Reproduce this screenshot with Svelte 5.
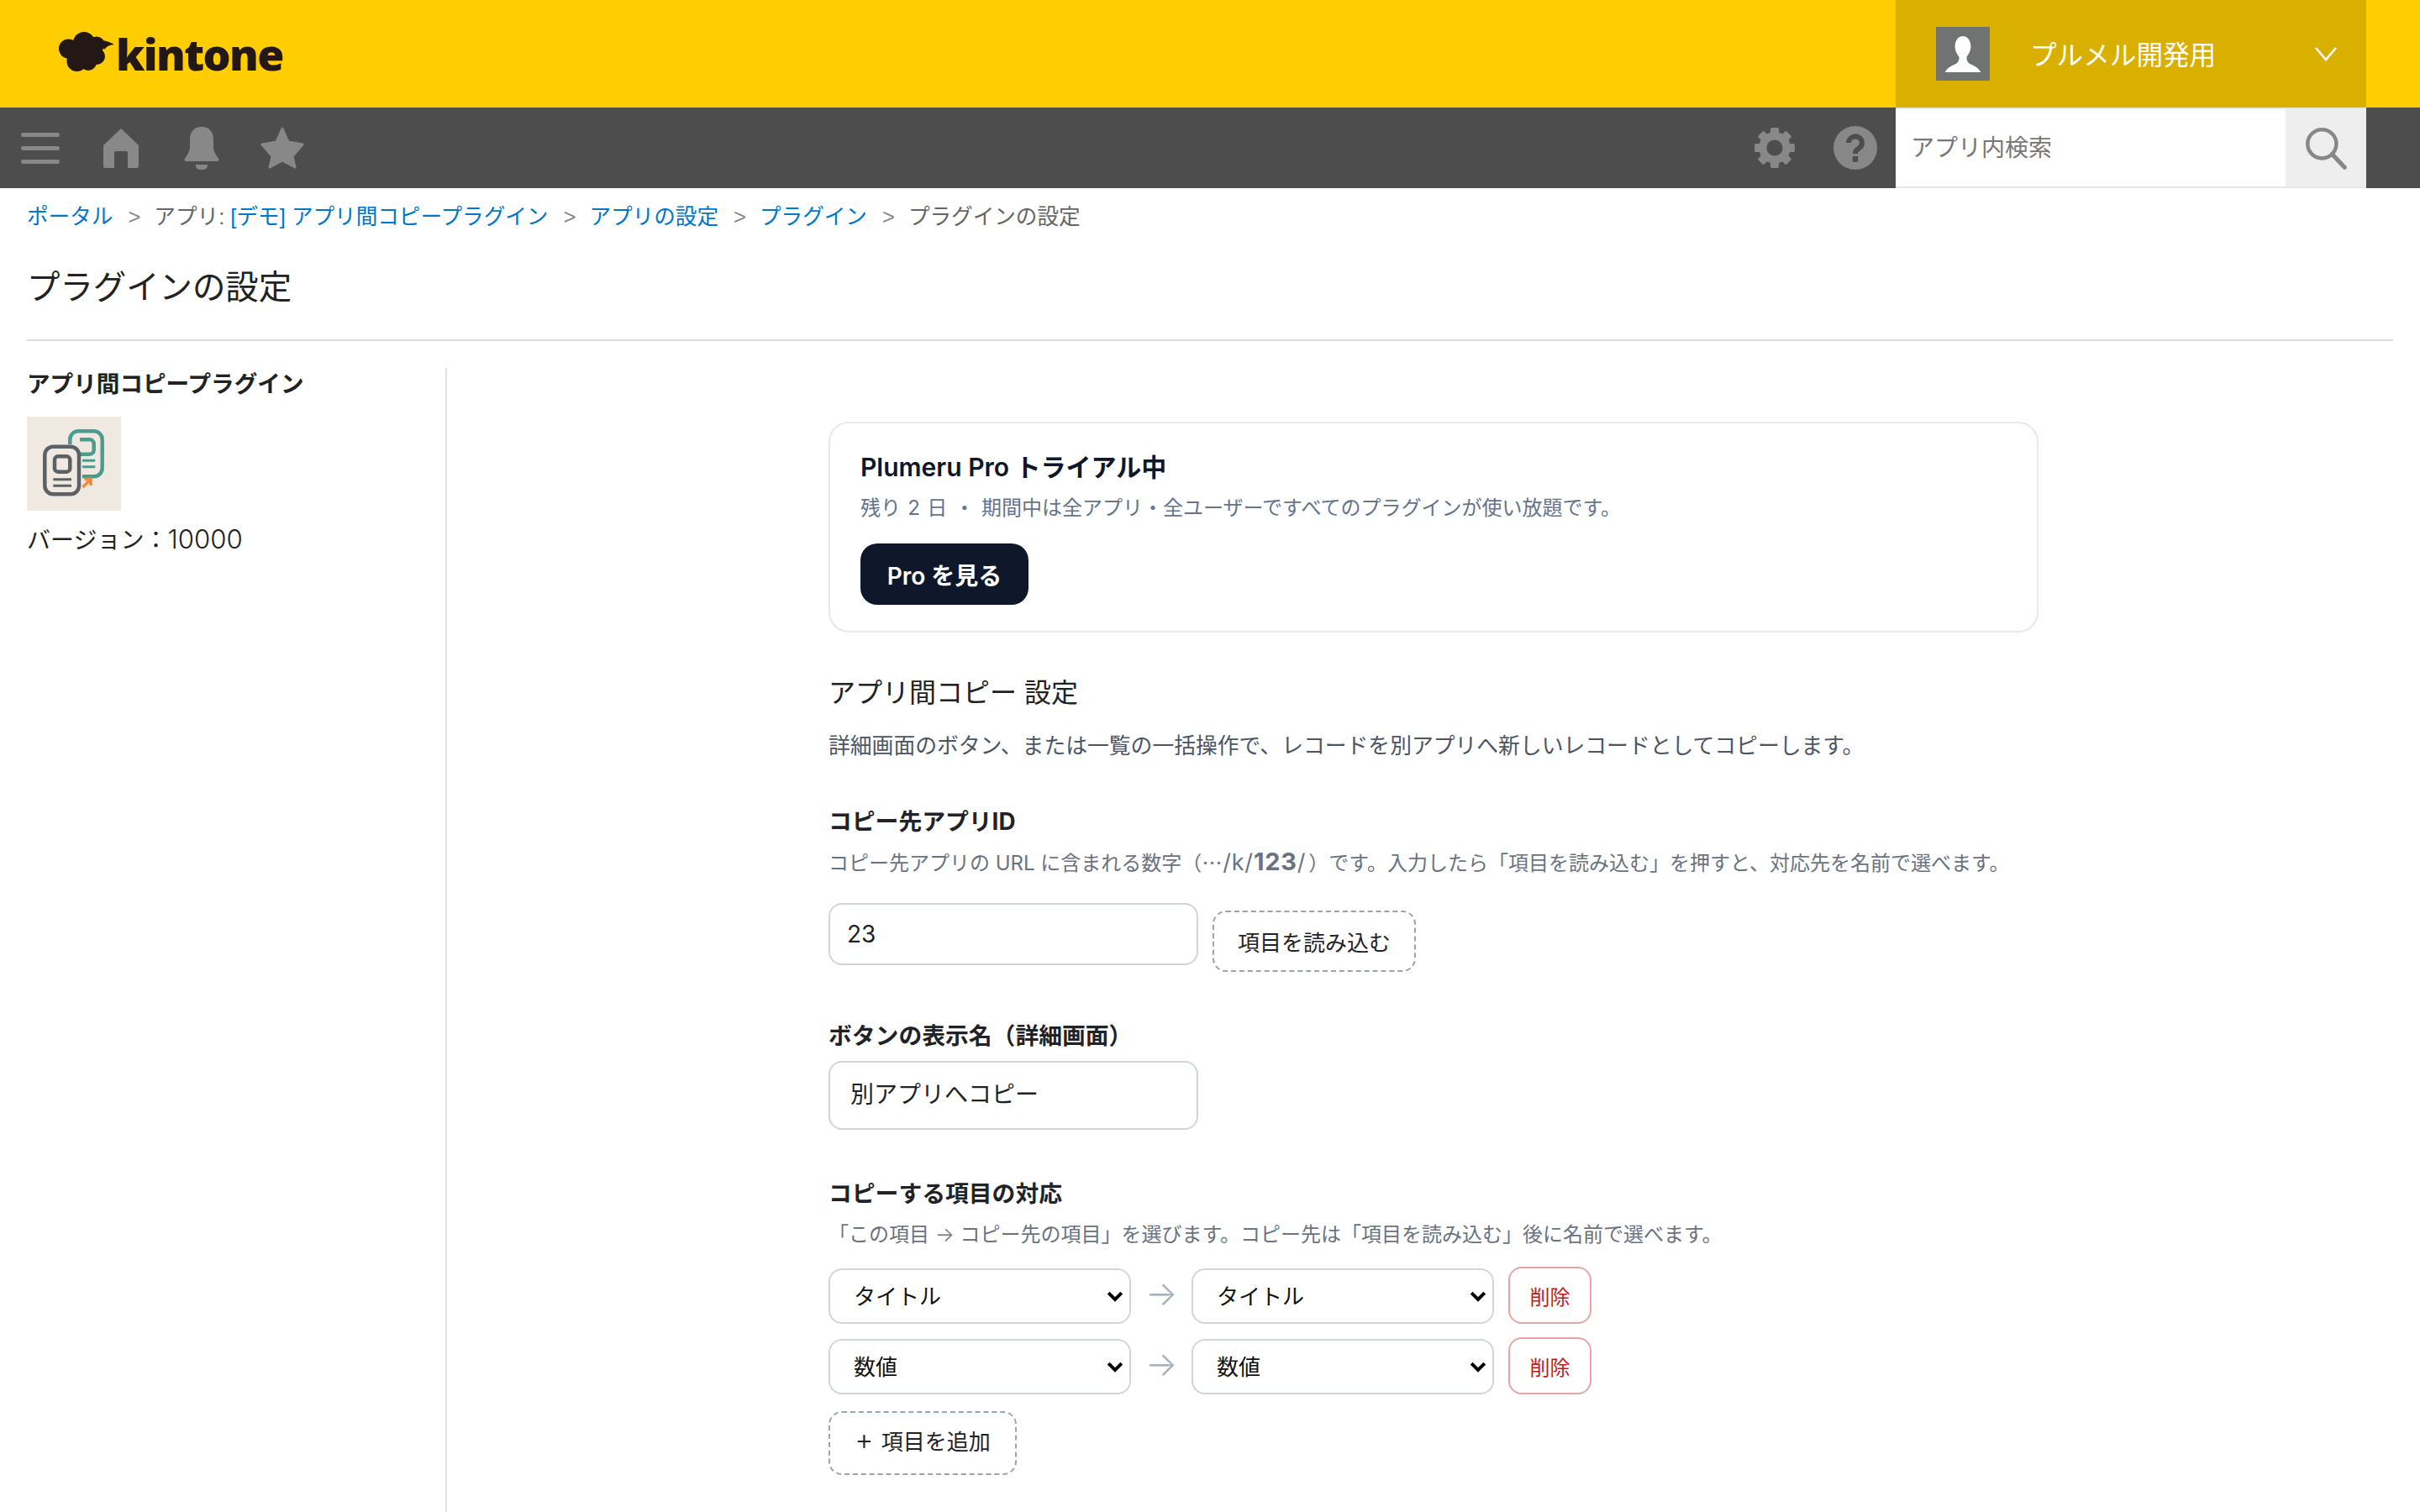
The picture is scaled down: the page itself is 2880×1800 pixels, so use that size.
<script>
  const crumbs = [
    { text: 'ポータル', link: true },
    { prefix: 'アプリ: ', text: '[デモ] アプリ間コピープラグイン', link: true },
    { text: 'アプリの設定', link: true },
    { text: 'プラグイン', link: true },
    { text: 'プラグインの設定', link: false },
  ];

  const fields = ['タイトル', '数値'];
  let rows = $state([
    { from: 'タイトル', to: 'タイトル' },
    { from: '数値', to: '数値' },
  ]);

  let appId = $state('23');
  let buttonName = $state('別アプリへコピー');

  const teeth = [0, 45, 90, 135, 180, 225, 270, 315];
</script>

<div class="page">
  <header class="top">
    <div class="logo">
      <svg class="cloud" viewBox="0 0 66 47" width="33" height="23.5" aria-hidden="true">
        <g fill="#231815">
          <circle cx="11.5" cy="20" r="11.5" />
          <circle cx="30" cy="13" r="13" />
          <circle cx="45" cy="15" r="9.5" />
          <circle cx="45" cy="29" r="10" />
          <circle cx="21.5" cy="35" r="12" />
          <circle cx="35" cy="36" r="10" />
          <circle cx="30" cy="25" r="12" />
          <path d="M50 10 C55 10 61 12 66 15 C61 15 57 17 54 21 Z" />
        </g>
      </svg>
      <span class="wordmark">kintone</span>
    </div>
    <div class="user">
      <div class="avatar">
        <svg viewBox="0 0 32 32" width="32" height="32" aria-hidden="true">
          <path
            fill="#fff"
            d="M16 5.5c-2.8 0-4.7 2.8-4.7 6c0 3 1.5 5 2.5 6.5c0 2-.5 3-2 4c-2 1-5 2-6.5 5h21.4c-1.5-3-4.5-4-6.5-5c-1.5-1-2-2-2-4c1-1.5 2.5-3.5 2.5-6.5c0-3.2-1.9-6-4.7-6z"
          />
        </svg>
      </div>
      <span class="user-name">プルメル開発用</span>
      <svg class="chevron" viewBox="0 0 14 10" width="14" height="10" aria-hidden="true">
        <path d="M1 1.5L7 8.5L13 1.5" fill="none" stroke="#fff" stroke-width="1.3" />
      </svg>
    </div>
  </header>

  <nav class="bar">
    <button class="nav-btn" aria-label="メニュー">
      <svg viewBox="0 0 24 20" width="24" height="20">
        <g fill="#888">
          <rect x="0.5" y="1" width="23" height="2.5" rx="1.2" />
          <rect x="0.5" y="9" width="23" height="2.5" rx="1.2" />
          <rect x="0.5" y="17" width="23" height="2.5" rx="1.2" />
        </g>
      </svg>
    </button>
    <button class="nav-btn" aria-label="ホーム">
      <svg viewBox="0 0 21 24" width="21" height="24">
        <path
          fill="#888"
          d="M10.5 0.5L21 10.5V23a1 1 0 0 1-1 1H14.5V15a1 1 0 0 0-1-1H7.5a1 1 0 0 0-1 1V24H1a1 1 0 0 1-1-1V10.5Z"
        />
      </svg>
    </button>
    <button class="nav-btn" aria-label="通知">
      <svg viewBox="0 0 22 26" width="22" height="26">
        <path
          fill="#888"
          d="M11 0.5C6.5 0.5 4 3.5 4 8V12.5C4 15 2.8 16.8 1 19.2C0.5 20 0.8 21 1.8 21H20.2C21.2 21 21.5 20 21 19.2C19.2 16.8 18 15 18 12.5V8C18 3.5 15.5 0.5 11 0.5Z"
        />
        <path fill="#888" d="M7.5 23H14.5V23.5A2.5 2.5 0 0 1 12 26H10A2.5 2.5 0 0 1 7.5 23.5Z" />
      </svg>
    </button>
    <button class="nav-btn" aria-label="お気に入り">
      <svg viewBox="0 0 26 25" width="26" height="25">
        <path
          fill="#888"
          stroke="#888"
          stroke-width="1.5"
          stroke-linejoin="round"
          d="M13 1L16.5 9L25 10.5L19 17.5L20.5 24L13 20L5.5 24L7 17.5L1 10.5L9.5 9Z"
        />
      </svg>
    </button>

    <div class="bar-right">
      <button class="nav-btn" aria-label="設定">
        <svg viewBox="0 0 24 24" width="25" height="25">
          <g fill="#888">
            {#each teeth as t}
              <rect x="9.6" y="0.5" width="4.8" height="5" rx="0.8" transform="rotate({t} 12 12)" />
            {/each}
          </g>
          <circle cx="12" cy="12" r="6.8" fill="none" stroke="#888" stroke-width="4.4" />
        </svg>
      </button>
      <button class="nav-btn" aria-label="ヘルプ">
        <svg viewBox="0 0 26 26" width="26" height="26">
          <circle cx="13" cy="13" r="13" fill="#888" />
          <path
            d="M9 10a4 3.8 0 1 1 6.2 3.2c-1.5 1-2.2 1.5-2.2 3.3"
            fill="none"
            stroke="#4d4d4d"
            stroke-width="3"
          />
          <rect x="11.4" y="18" width="3.2" height="3.4" fill="#4d4d4d" />
        </svg>
      </button>
      <div class="search">
        <input class="search-input" placeholder="アプリ内検索" />
        <button class="search-btn" aria-label="検索">
          <svg viewBox="0 0 28 28" width="26" height="26">
            <circle cx="11.5" cy="11.5" r="9.2" fill="none" stroke="#888" stroke-width="2.4" />
            <path d="M18 18L26 26.5" stroke="#888" stroke-width="2.8" stroke-linecap="round" />
          </svg>
        </button>
      </div>
    </div>
  </nav>

  <div class="crumbs">
    {#each crumbs as c, i}
      {#if i > 0}<span class="sep">&gt;</span>{/if}
      {#if c.prefix}<span class="crumb-text">{c.prefix}</span>{/if}
      {#if c.link}
        <a href="#top" class="crumb-link">{c.text}</a>
      {:else}
        <span class="crumb-text">{c.text}</span>
      {/if}
    {/each}
  </div>

  <h1 class="page-title">プラグインの設定</h1>
  <hr class="rule" />

  <div class="body">
    <aside class="side">
      <div class="plugin-name">アプリ間コピープラグイン</div>
      <svg class="plugin-icon" viewBox="0 0 112 112" width="56" height="56" aria-hidden="true">
        <rect width="112" height="112" fill="#f0e9e2" />
        <g fill="none" stroke="#4a9d8e" stroke-width="4.5">
          <path d="M51.3 33V27.3a10 10 0 0 1 10-10h18.4a10 10 0 0 1 10 10V61.3a10 10 0 0 1-10 10H66" />
          <path d="M63 27.3H74.7a5 5 0 0 1 5 5v7.4a5 5 0 0 1-5 5H63" />
          <path d="M66 52.3H81.3M66 59.7H81.3" stroke-width="3" />
        </g>
        <g fill="none" stroke="#5b6166" stroke-width="4.5">
          <rect x="21.3" y="35.7" width="40.7" height="56.6" rx="10" />
          <rect x="33" y="47.3" width="18.3" height="18.4" rx="4" />
          <path d="M31.3 74.7H53M31.3 82.3H53" stroke-width="3" />
        </g>
        <path d="M66.5 84L76 74.5M68.5 74.5H76V82" fill="none" stroke="#f08a3c" stroke-width="3.5" />
      </svg>
      <div class="version">バージョン：<span class="num">10000</span></div>
    </aside>

    <main class="form">
      <section class="trial">
        <div class="trial-title">Plumeru Pro トライアル中</div>
        <div class="trial-sub">残り 2 日 ・ 期間中は全アプリ・全ユーザーですべてのプラグインが使い放題です。</div>
        <button class="pro-btn">Pro を見る</button>
      </section>

      <h2 class="heading">アプリ間コピー 設定</h2>
      <p class="desc">詳細画面のボタン、または一覧の一括操作で、レコードを別アプリへ新しいレコードとしてコピーします。</p>

      <label class="label first" for="app-id">コピー先アプリID</label>
      <p class="hint hint-id">
        コピー先アプリの URL に含まれる数字（<span class="url"><span class="dots">…</span>/k/<b>123</b>/</span>）です。入力したら「項目を読み込む」を押すと、対応先を名前で選べます。
      </p>
      <div class="id-row">
        <input id="app-id" class="text-input id-input" bind:value={appId} />
        <button class="dashed load-btn">項目を読み込む</button>
      </div>

      <label class="label second" for="btn-name">ボタンの表示名（詳細画面）</label>
      <input id="btn-name" class="text-input name-input" bind:value={buttonName} />

      <div class="label third">コピーする項目の対応</div>
      <p class="hint hint-map">「この項目 <span class="thin">→</span> コピー先の項目」を選びます。コピー先は「項目を読み込む」後に名前で選べます。</p>

      <div class="rows">
        {#each rows as row}
          <div class="map-row">
            <select class="field" bind:value={row.from}>
              {#each fields as f}<option>{f}</option>{/each}
            </select>
            <span class="arrow">→</span>
            <select class="field" bind:value={row.to}>
              {#each fields as f}<option>{f}</option>{/each}
            </select>
            <button class="del-btn">削除</button>
          </div>
        {/each}
      </div>

      <button class="dashed add-btn"><span class="plus">+</span> 項目を追加</button>
    </main>
  </div>
</div>

<style>
  :global(body) {
    margin: 0;
    background: #fff;
  }

  .page {
    zoom: 2;
    height: 900px;
    overflow: hidden;
    display: flex;
    flex-direction: column;
    color: #1f2328;
    font-family: 'Liberation Sans', 'Noto Sans CJK JP', sans-serif;
  }

  button {
    font-family: inherit;
    cursor: pointer;
  }

  .top {
    flex: none;
    height: 64px;
    background: #ffcd00;
    display: flex;
    justify-content: space-between;
    padding-right: 32px;
  }

  .logo {
    display: flex;
    align-items: center;
    padding-left: 35px;
    gap: 1px;
  }
  .cloud {
    margin-top: -3px;
  }
  .wordmark {
    font-family: 'Open Sans', sans-serif;
    font-weight: 800;
    font-size: 26px;
    letter-spacing: -0.8px;
    color: #231815;
    margin-top: -1px;
  }

  .user {
    width: 280px;
    box-sizing: border-box;
    background: #d9b000;
    display: flex;
    align-items: center;
    padding: 0 17px 0 24px;
  }
  .avatar {
    width: 32px;
    height: 32px;
    background: #717372;
    display: flex;
  }
  .user-name {
    margin: -1px 0 0 24px;
    font-size: 15.8px;
    color: #fff;
    flex: 1;
  }

  .bar {
    flex: none;
    height: 48px;
    background: #4d4d4d;
    display: flex;
    align-items: center;
    padding-right: 32px;
  }
  .bar-right {
    margin-left: auto;
    display: flex;
    align-items: center;
  }
  .nav-btn {
    width: 48px;
    height: 48px;
    padding: 0;
    border: 0;
    background: none;
    display: flex;
    align-items: center;
    justify-content: center;
  }

  .search {
    display: flex;
    height: 48px;
    box-sizing: border-box;
    border-top: 1px solid #e3e7e8;
    border-bottom: 1px solid #e3e7e8;
  }
  .search-input {
    width: 232px;
    box-sizing: border-box;
    border: 0;
    outline: 0;
    padding: 1px 9px 0;
    font-family: inherit;
    font-size: 14px;
  }
  .search-input::placeholder {
    color: #777;
  }
  .search-btn {
    width: 48px;
    border: 0;
    padding: 0;
    background: #eee;
    display: flex;
    align-items: center;
    justify-content: center;
  }

  .crumbs {
    flex: none;
    margin-top: 8.5px;
    padding-left: 16px;
    height: 17px;
    line-height: 17px;
    font-size: 12.8px;
    display: flex;
    white-space: pre;
  }
  .crumb-link {
    color: #0076c8;
    text-decoration: none;
  }
  .crumb-text {
    color: #666;
  }
  .sep {
    color: #888;
    margin: 0 8px 0 9px;
  }

  .page-title {
    flex: none;
    margin: 18.7px 0 0 16px;
    font-size: 19.7px;
    line-height: 30px;
    font-weight: 400;
    color: #222;
  }
  .rule {
    flex: none;
    width: calc(100% - 32px);
    margin: 16px 16px 0;
    border: 0;
    border-top: 1px solid #ddd;
  }

  .body {
    flex: 1;
    display: flex;
    margin-top: 16px;
    min-height: 0;
  }

  .side {
    flex: none;
    width: 266px;
    box-sizing: border-box;
    padding-left: 16px;
    border-right: 1px solid #e3e3e3;
  }
  .plugin-name {
    margin-top: 1px;
    font-size: 13.8px;
    line-height: 18px;
    font-weight: 700;
    color: #222;
  }
  .plugin-icon {
    display: block;
    margin-top: 10px;
  }
  .version {
    margin-top: 8.5px;
    font-size: 14px;
    line-height: 17px;
    color: #222;
  }
  .num {
    font-family: Inter, sans-serif;
    font-size: 15.6px;
    font-weight: 300;
  }

  .form {
    margin-left: 227px;
    width: 720px;
    padding-top: 32px;
    font-family: Inter, 'Noto Sans CJK JP', sans-serif;
  }

  .trial {
    box-sizing: border-box;
    height: 125.5px;
    border: 1px solid #e5e9f0;
    border-radius: 12px;
    padding: 15px 18px;
  }
  .trial-title {
    font-size: 15px;
    line-height: 22px;
    font-weight: 600;
    color: #0f172a;
  }
  .trial-sub {
    margin-top: 3.5px;
    font-size: 12px;
    line-height: 20px;
    word-spacing: 0.8px;
    color: #64748b;
  }
  .pro-btn {
    display: block;
    margin-top: 11px;
    width: 100px;
    height: 36.5px;
    padding: 0;
    border: 0;
    border-radius: 10px;
    background: #0f172a;
    color: #fff;
    font-size: 14px;
    font-weight: 600;
  }

  .heading {
    margin: 24px 0 0;
    font-size: 16px;
    line-height: 24px;
    font-weight: 400;
    color: #222;
  }
  .desc {
    margin: 9.5px 0 0;
    font-size: 12.9px;
    line-height: 20px;
    color: #4b5563;
  }

  .label {
    display: block;
    font-size: 13.9px;
    line-height: 20px;
    font-weight: 700;
    color: #1f2328;
  }
  .label.first {
    margin-top: 25px;
  }
  .label.second {
    margin-top: 28px;
  }
  .label.third {
    margin-top: 28px;
  }

  .hint {
    font-size: 12px;
    line-height: 18px;
    color: #6b7280;
  }
  .url {
    font-size: 13.5px;
    letter-spacing: 0.4px;
    margin-right: 1.5px;
  }
  .url b {
    font-size: 14.5px;
  }
  .dots {
    font-family: 'Noto Sans CJK JP', sans-serif;
    font-size: 12px;
  }
  .thin {
    font-weight: 300;
  }
  .hint-id {
    margin: 5px 0 0;
  }
  .hint-map {
    margin: 5.5px 0 0;
  }

  .id-row {
    margin-top: 14.5px;
    display: flex;
    align-items: flex-start;
    gap: 8.5px;
  }

  .text-input {
    display: block;
    width: 220px;
    box-sizing: border-box;
    border: 1px solid #d1d5db;
    border-radius: 8px;
    padding: 0 11px;
    font-family: inherit;
    font-size: 14px;
    color: #1f2328;
    background: #fff;
    outline: 0;
  }
  .id-input {
    height: 37px;
    padding-left: 10px;
  }
  .name-input {
    height: 41px;
    margin-top: 5px;
    padding: 0 12px 3.5px;
  }

  .dashed {
    box-sizing: border-box;
    border: 1px dashed #9ca3af;
    border-radius: 8px;
    background: #fff;
    color: #1f2328;
    font-size: 13px;
    padding: 0;
  }
  .load-btn {
    margin-top: 4.5px;
    width: 121px;
    height: 36.5px;
  }
  .add-btn {
    display: block;
    margin-top: 10px;
    width: 112px;
    height: 38px;
    padding-bottom: 3.5px;
    word-spacing: 1px;
  }
  .plus {
    font-size: 17px;
    font-weight: 300;
    line-height: 1;
  }

  .rows {
    margin-top: 10px;
    display: flex;
    flex-direction: column;
    gap: 8px;
  }
  .map-row {
    display: flex;
    align-items: flex-end;
    height: 34px;
  }
  .field {
    appearance: none;
    width: 180px;
    height: 33px;
    box-sizing: border-box;
    border: 1px solid #d1d5db;
    border-radius: 8px;
    padding: 0 10px 0 14px;
    background: #fff url("data:image/svg+xml,%3Csvg xmlns='http://www.w3.org/2000/svg' viewBox='0 0 18 12'%3E%3Cpath d='M2 2.5L9 9.5L16 2.5' fill='none' stroke='%23000' stroke-width='3.6'/%3E%3C/svg%3E")
      no-repeat right 3.5px center / 10px 7px;
    color: #111;
    font-family: inherit;
    font-size: 13px;
    outline: 0;
  }
  .arrow {
    width: 36px;
    height: 33px;
    line-height: 30px;
    text-align: center;
    font-size: 20px;
    font-weight: 300;
    color: #a8b0bc;
  }
  .del-btn {
    margin-left: 8.5px;
    width: 49.5px;
    height: 34px;
    box-sizing: border-box;
    padding: 0;
    border: 1px solid #e3a6a6;
    border-radius: 8px;
    background: #fff;
    color: #c01818;
    font-size: 12px;
  }
</style>
